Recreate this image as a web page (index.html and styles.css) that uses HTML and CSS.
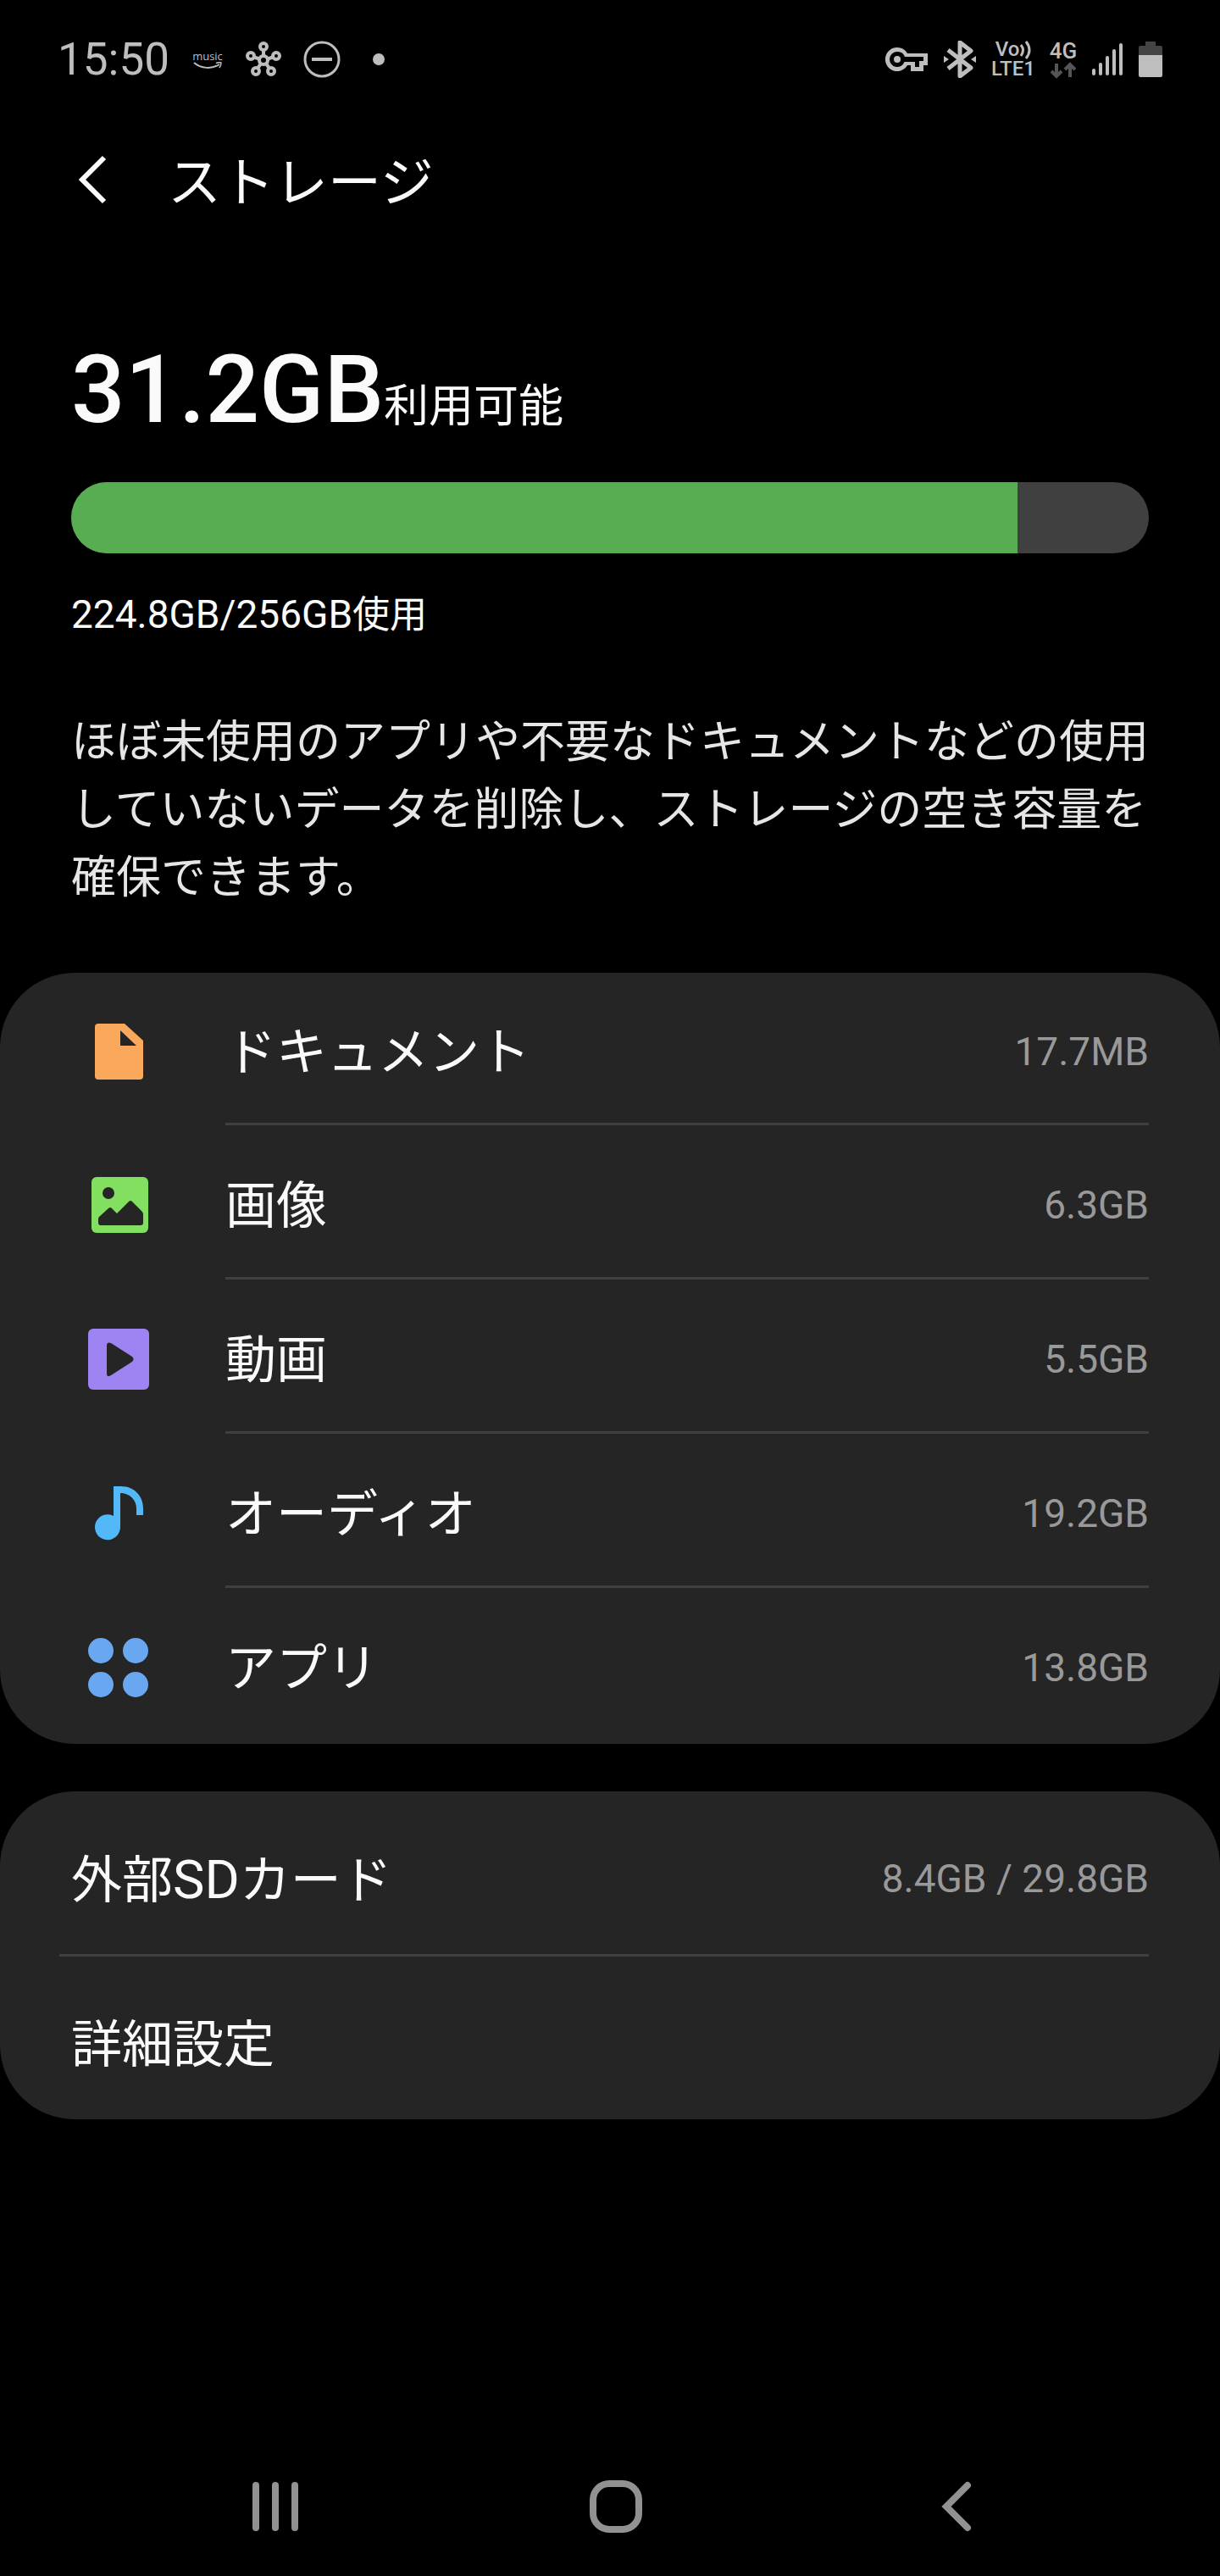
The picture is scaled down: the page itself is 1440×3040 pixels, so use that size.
FILE: index.html
```html
<!DOCTYPE html>
<html lang="ja">
<head>
<meta charset="utf-8">
<meta name="viewport" content="width=device-width, initial-scale=1">
<title>ストレージ</title>
<link rel="stylesheet" href="styles.css">
</head>
<body>
<div class="status">
  <div class="status-left">
    <span class="clock">15:50</span>
    <span class="music">
      <span>music</span>
      <svg width="34" height="9" viewBox="0 0 34 9" fill="none" stroke="currentColor" stroke-width="2"><path d="M1 1C9 8 22 9 31 3"/><path d="M27 1.500C30 .500 32 .500 33 1C33 3 32.500 5 31 7" stroke-width="1.500"/></svg>
    </span>
    <svg class="hub" width="42" height="42" viewBox="0 0 42 42" fill="none" stroke="currentColor" stroke-width="4">
      <path d="M21 10v7M10 18.500l6 2M32 18.500l-6 2M14.500 31l3.500-5M27.500 31l-3.500-5"/>
      <circle cx="21" cy="22" r="5"/><circle cx="21" cy="6" r="4"/><circle cx="6" cy="17" r="4"/><circle cx="36" cy="17" r="4"/><circle cx="12" cy="35" r="4"/><circle cx="30" cy="35" r="4"/>
    </svg>
    <svg class="dnd" width="44" height="44" viewBox="0 0 44 44" fill="none" stroke="currentColor"><circle cx="22" cy="22" r="20" stroke-width="3"/><path d="M10 22h24" stroke-width="4"/></svg>
    <span class="dot"></span>
  </div>
  <div class="status-right">
    <svg width="50" height="30" viewBox="0 0 50 30"><path fill="currentColor" fill-rule="evenodd" d="M14 1a14 14 0 0 1 12 7h24v14h-5v7H30v-7h-4A14 14 0 1 1 14 1zm0 5a9 9 0 1 0 8.500 12H35v6h5v-7h5v-5H23A9 9 0 0 0 14 6z"/><circle cx="14" cy="15" r="4" fill="currentColor"/></svg>
    <svg width="38" height="44" viewBox="0 0 38 44"><path d="M5 11l27 21-13 10V2l13 10L5 33" fill="none" stroke="currentColor" stroke-width="5" stroke-linejoin="round"/><path d="M0 18l6 4-6 4zM38 18l-6 4 6 4z" fill="currentColor"/></svg>
    <div class="volte">
      <span class="vo">Vo<svg width="14" height="22" viewBox="0 0 14 22" fill="none" stroke="currentColor" stroke-width="3"><path d="M2 5q5 6 0 13M8 1q8 10 0 20"/></svg></span>
      <span>LTE1</span>
    </div>
    <div class="mobile">
      <span>4G</span>
      <svg width="30" height="20" viewBox="0 0 30 20" fill="none" stroke="#555" stroke-width="4"><path d="M7 2v14M1 11l6 6 6-6M23 18V4M17 9l6-6 6 6"/></svg>
    </div>
    <svg width="36" height="40" viewBox="0 0 36 40" stroke="currentColor" stroke-width="4" stroke-linecap="round"><path d="M2 33v4M10 26v11M18 18v19M26 10v27M34 3v34"/></svg>
    <svg width="28" height="44" viewBox="0 0 28 44"><path d="M8 1h12v5h6q2 0 2 2v10H0V8q0-2 2-2h6z" fill="#444"/><path d="M0 17h28v24q0 2-2 2H2q-2 0-2-2z" fill="currentColor"/></svg>
  </div>
</div>

<header class="bar">
  <button class="up" type="button" aria-label="戻る"><svg width="34" height="58" viewBox="0 0 34 58" fill="none" stroke="currentColor" stroke-width="6"><path d="M31 3L5 29l26 26"/></svg></button>
  <h1>ストレージ</h1>
</header>

<main>
  <section class="summary">
    <p class="free"><strong>31.2GB</strong><span>利用可能</span></p>
    <div class="usage" role="progressbar" aria-label="使用量" aria-valuemin="0" aria-valuemax="256" aria-valuenow="224.8"><div class="usage-fill" style="width:87.8%"></div></div>
    <p class="used"><span class="latin">224.8GB/256GB</span>使用</p>
    <p class="hint">ほぼ未使用のアプリや不要なドキュメントなどの使用していないデータを削除し、ストレージの空き容量を確保できます。</p>
  </section>

  <ul class="card categories">
    <li><a href="#documents">
      <svg class="icon" viewBox="0 0 72 72"><path fill="#faa85b" fill-rule="evenodd" d="M12 3h31l22 20v42q0 4-4 4H12q-4 0-4-4V7q0-4 4-4zm26 8v18h19z"/></svg>
      <span class="label">ドキュメント</span><span class="value">17.7MB</span></a></li>
    <li><a href="#images">
      <svg class="icon" viewBox="0 0 72 72"><rect x="4" y="3" width="67" height="66" rx="6" fill="#83df60"/><circle cx="24" cy="22" r="7" fill="#252525"/><path fill="#252525" d="M12 53q0-2 1-3l11-10q2-2 4 0l6 6 14-14q2-2 4 0l11 11q2 2 2 4v10q0 3-3 3H15q-3 0-3-3z"/></svg>
      <span class="label">画像</span><span class="value">6.3GB</span></a></li>
    <li><a href="#videos">
      <svg class="icon" viewBox="0 0 72 72"><rect width="72" height="72" rx="6" fill="#9d84f2"/><path fill="#252525" d="M22 20q0-5 5-3l25 16q3 3 0 6L27 55q-5 3-5-2z"/></svg>
      <span class="label">動画</span><span class="value">5.5GB</span></a></li>
    <li><a href="#audio">
      <svg class="icon" viewBox="0 0 72 72"><path fill="#52b8f8" d="M30 4h9c15 0 26 11 26 26v8h-8v-8c0-10-8-18-19-18v40a15 15 0 1 1-8-13z"/></svg>
      <span class="label">オーディオ</span><span class="value">19.2GB</span></a></li>
    <li><a href="#apps">
      <svg class="icon" viewBox="0 0 72 72" fill="#69a7f0"><circle cx="15" cy="16" r="15"/><circle cx="56" cy="16" r="15"/><circle cx="15" cy="56" r="15"/><circle cx="56" cy="56" r="15"/></svg>
      <span class="label">アプリ</span><span class="value">13.8GB</span></a></li>
  </ul>

  <ul class="card extras">
    <li><a href="#sdcard"><span class="label">外部<span class="latin">SD</span>カード</span><span class="value">8.4GB / 29.8GB</span></a></li>
    <li><a href="#advanced"><span class="label">詳細設定</span></a></li>
  </ul>
</main>

<nav class="navbar" aria-label="システム">
  <button type="button" aria-label="履歴"><svg width="62" height="62" viewBox="0 0 62 62" stroke="currentColor" stroke-width="8" stroke-linecap="round"><path d="M8 6v50M31 6v50M54 6v50"/></svg></button>
  <button type="button" aria-label="ホーム"><svg width="62" height="62" viewBox="0 0 62 62" fill="none" stroke="currentColor" stroke-width="8"><rect x="4" y="4" width="54" height="54" rx="19"/></svg></button>
  <button type="button" aria-label="戻る"><svg width="62" height="62" viewBox="0 0 62 62" fill="none" stroke="currentColor" stroke-width="8" stroke-linecap="round"><path d="M44 6L19 31l25 25"/></svg></button>
</nav>
</body>
</html>
```
FILE: styles.css
```css
* { box-sizing: border-box; }

body {
  margin: 0;
  min-height: 100vh;
  display: flex;
  flex-direction: column;
  background: #000;
  color: #fafafa;
  font-family: Roboto, "Noto Sans CJK JP", sans-serif;
}

svg { display: block; flex: none; }
h1, p, ul { margin: 0; padding: 0; }
ul { list-style: none; }
a { color: inherit; text-decoration: none; }

button {
  padding: 0;
  border: 0;
  background: none;
  color: inherit;
  cursor: pointer;
}

/* Status bar */
.status {
  display: flex;
  justify-content: space-between;
  align-items: center;
  height: 140px;
  padding: 0 68px;
  color: #bebebe;
}

.status-left, .status-right { display: flex; align-items: center; }
.status-left { gap: 26px; }
.status-right { gap: 19px; }
.clock { font-size: 53px; line-height: 60px; }

.music {
  display: flex;
  flex-direction: column;
  align-items: center;
  width: 38px;
  font: 13px/14px "Open Sans", sans-serif;
}

.dot {
  width: 14px;
  height: 14px;
  margin-left: 12px;
  border-radius: 50%;
  background: currentColor;
}

.volte, .mobile {
  display: flex;
  flex-direction: column;
  align-items: center;
  font-weight: 500;
}

.volte { width: 50px; font-size: 24px; line-height: 23px; }
.vo { display: flex; align-items: center; }
.mobile { width: 30px; font-size: 26px; line-height: 26px; }

/* Title bar */
.bar {
  display: flex;
  align-items: center;
  gap: 72px;
  height: 144px;
  padding: 0 92px;
}

h1 { padding-top: 8px; font-size: 63px; line-height: 80px; font-weight: 400; }

/* Storage summary */
.summary { padding: 96px 84px 72px; }

.free {
  display: flex;
  align-items: baseline;
  font-size: 53px;
  line-height: 160px;
}

.free strong { font-size: 112px; font-weight: 500; }

.usage {
  height: 84px;
  margin-top: 9px;
  border-radius: 42px;
  background: #404040;
  overflow: hidden;
}

.usage-fill { height: 100%; background: #58ad52; }

.used { margin-top: 40px; font-size: 44px; line-height: 64px; }
.used .latin { font-size: 46px; }
.hint { margin-top: 78px; font-size: 53px; line-height: 80px; color: #e6e6e6; }

/* Grouped lists */
.card { border-radius: 88px; background: #252525; }
.card a { display: flex; align-items: center; }
.label { flex: 1; padding-top: 4px; font-size: 60px; line-height: 80px; }
.label .latin { font-size: 63px; }
.value { font-size: 46px; line-height: 60px; color: #999; }
.icon { width: 72px; height: 72px; margin-right: 90px; }

.categories { padding-bottom: 2px; }
.categories li { padding: 0 84px 0 104px; }
.categories a { min-height: 182px; padding-top: 6px; }
.categories li:first-child a { min-height: 180px; }

.categories li:not(:last-child) a {
  background: linear-gradient(#404040, #404040) 162px 100% / 100% 3px no-repeat;
}

.extras { margin-top: 56px; padding: 0 84px 0 70px; }
.extras a { min-height: 192px; padding: 14px 0 0 14px; }
.extras li:first-child { border-bottom: 3px solid #404040; }

/* System navigation */
.navbar {
  display: flex;
  justify-content: center;
  gap: 340px;
  margin-top: auto;
  padding: 50px 0 51px 14px;
  color: #919191;
}
```
